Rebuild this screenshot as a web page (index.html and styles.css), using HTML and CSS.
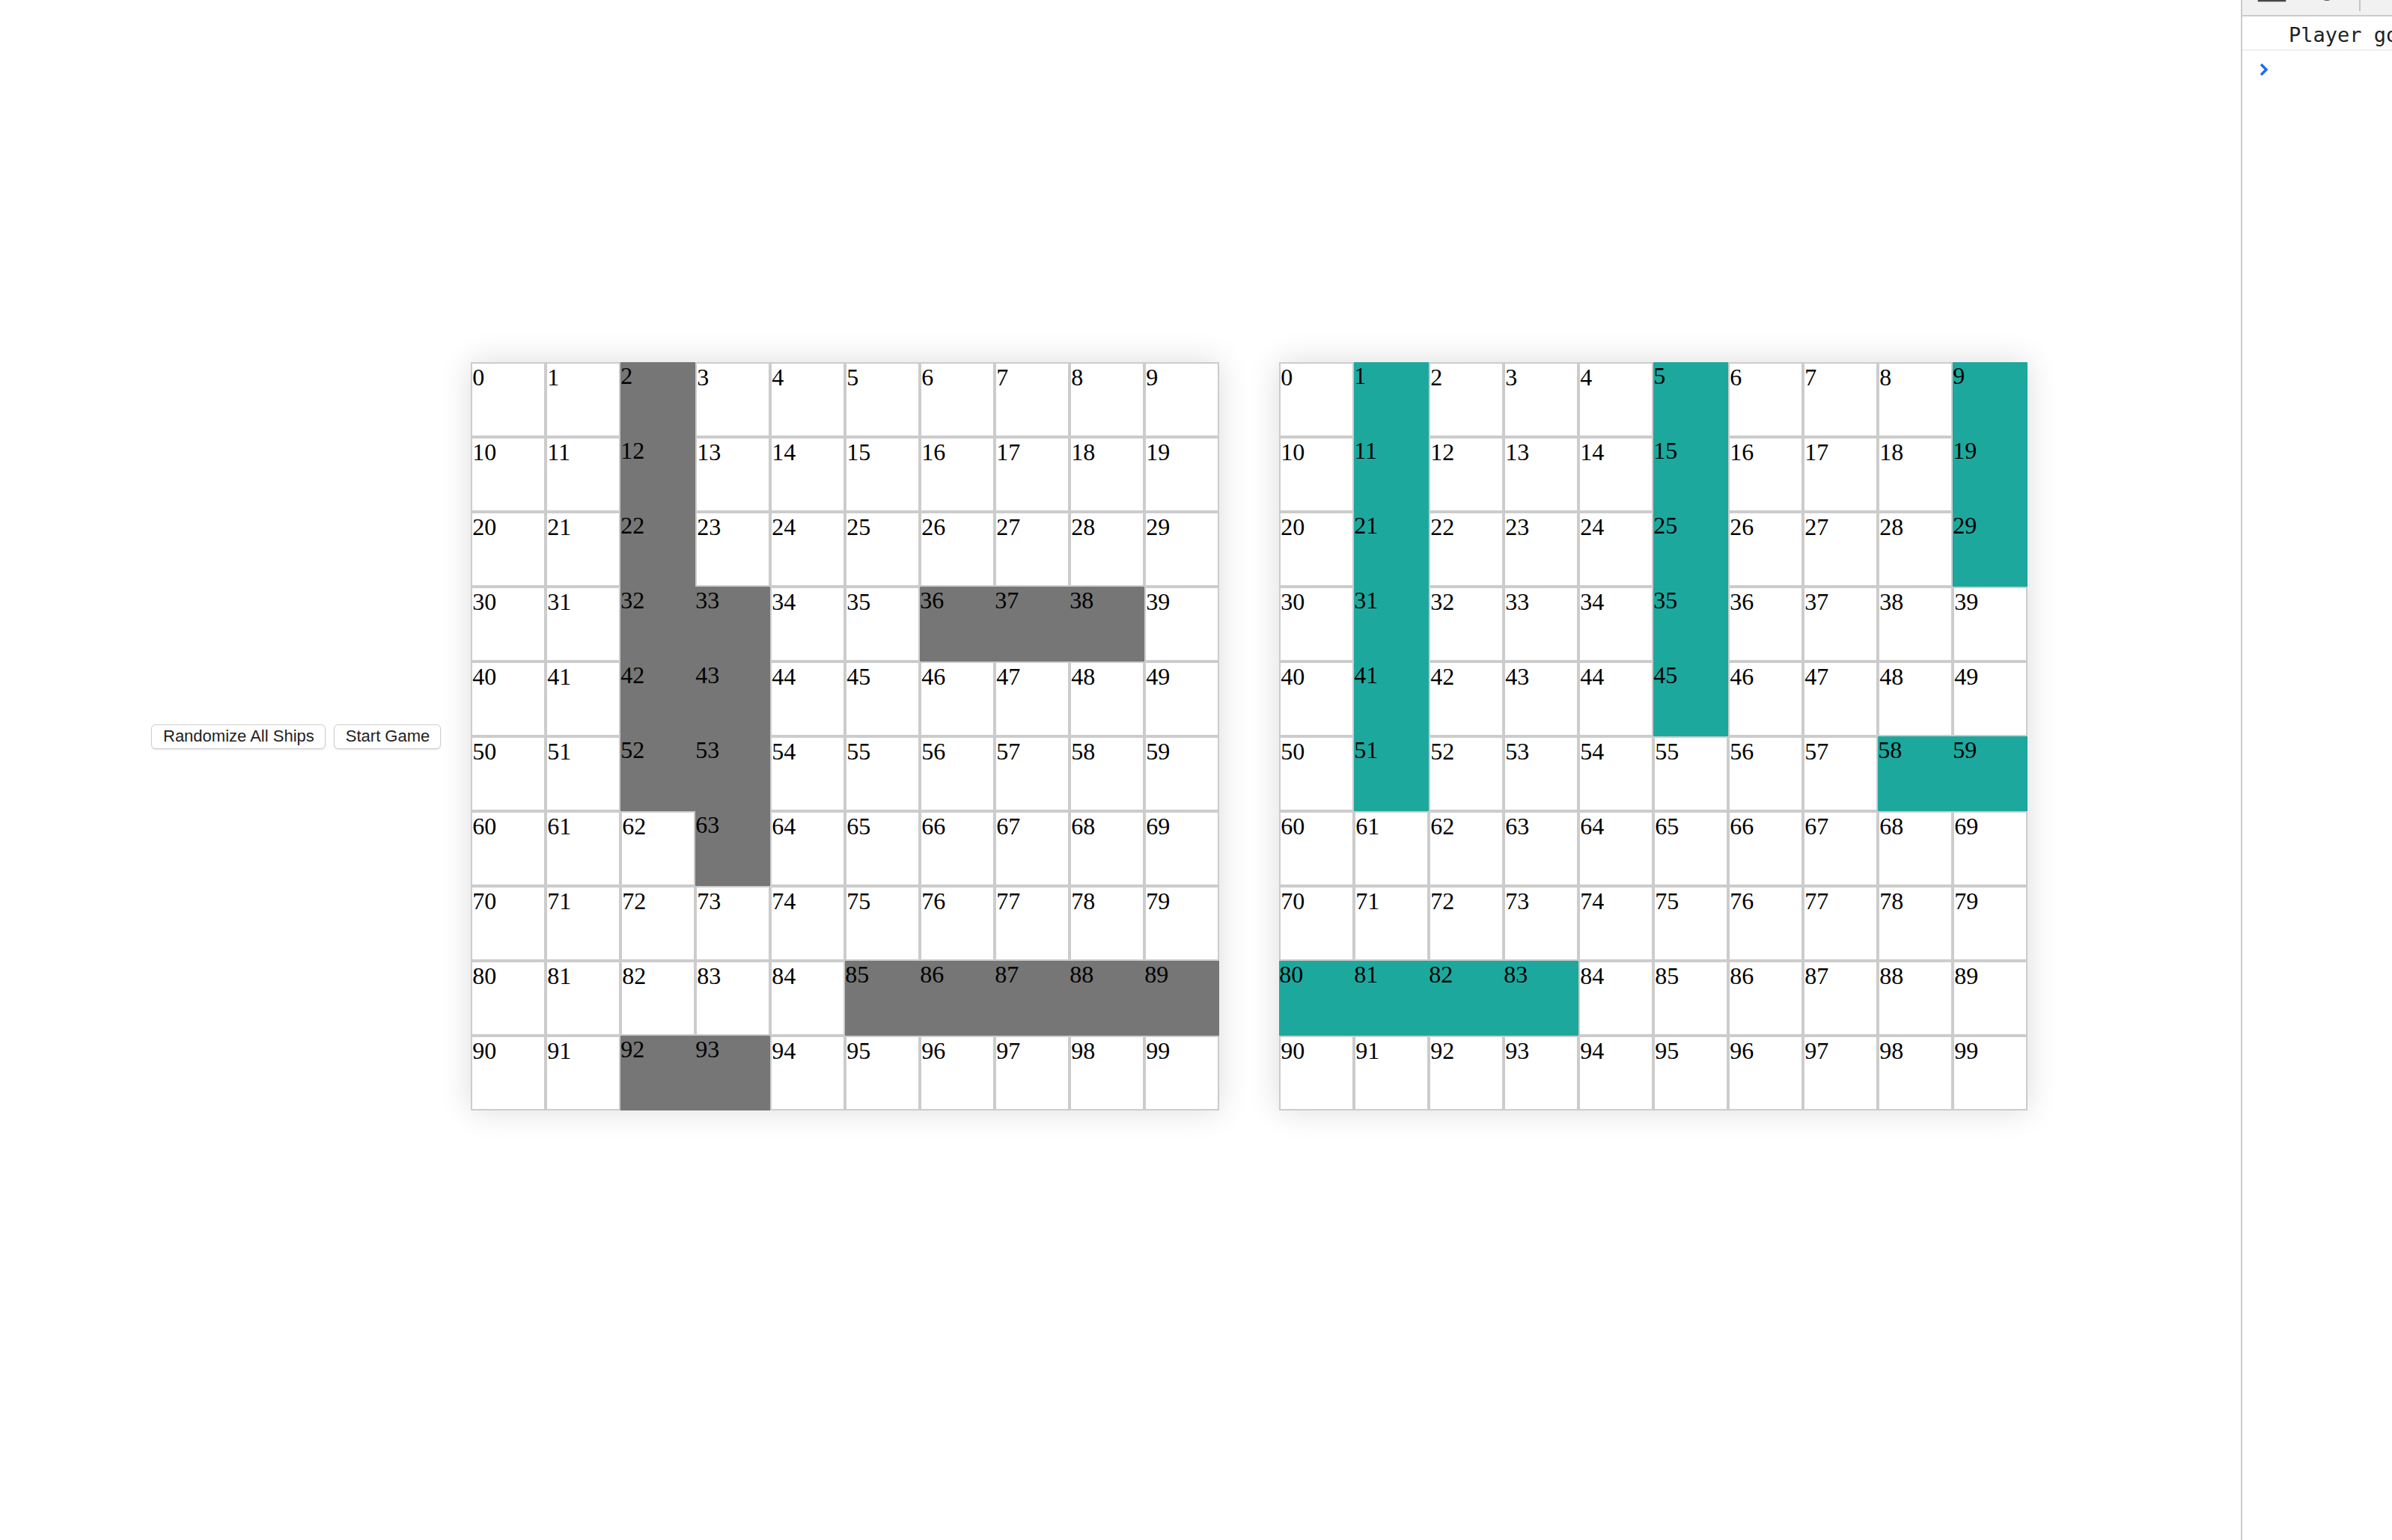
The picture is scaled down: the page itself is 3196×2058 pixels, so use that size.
FILE: index.html
```html
<!DOCTYPE html>
<html lang='en'>

<head>
    <meta charset='UTF-8'>
    <meta name='viewport' content='width=device-width, initial-scale=1.0'>
    <title>Battleship</title>
    <link rel="stylesheet" href="styles.css">
</head>

<body>
    <div id="page">
        <div id="controls">
            <button id="randomize" type="button">Randomize All Ships</button>
            <button id="start" type="button">Start Game</button>
        </div>
        <div class="board" id="player-board"></div>
        <div class="board" id="computer-board"></div>
    </div>

    <aside id="devtools">
        <div class="dt-toolbar">
            <svg width="200" height="20" viewBox="0 0 200 20">
                <rect x="22" y="-20" width="35" height="21" fill="none" stroke="#474747" stroke-width="2.5"/>
                <line x1="36" y1="-20" x2="36" y2="1" stroke="#474747" stroke-width="2.5"/>
                <circle cx="113" cy="-9" r="10" fill="#474747"/>
                <line x1="157" y1="0" x2="157" y2="15" stroke="#c4c4c4" stroke-width="2"/>
            </svg>
        </div>
        <div class="dt-message">Player goes first</div>
        <div class="dt-prompt">
            <svg width="14" height="20" viewBox="0 0 14 20">
                <path d="M3 3 L10 10 L3 17" fill="none" stroke="#1a6ef0" stroke-width="3.5"/>
            </svg>
        </div>
    </aside>

    <script>
        var playerShips = [2, 12, 22, 32, 42, 52, 33, 43, 53, 63, 36, 37, 38, 85, 86, 87, 88, 89, 92, 93];
        var computerShips = [1, 11, 21, 31, 41, 51, 5, 15, 25, 35, 45, 9, 19, 29, 58, 59, 80, 81, 82, 83];

        function buildBoard(id, ships, shipClass) {
            var board = document.getElementById(id);
            for (var i = 0; i < 100; i++) {
                var cell = document.createElement("div");
                cell.className = "cell";
                if (ships.indexOf(i) != -1) {
                    cell.className += " " + shipClass;
                }
                cell.textContent = i;
                board.appendChild(cell);
            }
        }

        buildBoard("player-board", playerShips, "ship");
        buildBoard("computer-board", computerShips, "enemy-ship");
    </script>
</body>
</html>
```

FILE: styles.css
```css
html, body {
    margin: 0;
    padding: 0;
    height: 100%;
    background-color: #ffffff;
    overflow: hidden;
}

body {
    display: flex;
}

#page {
    flex: 1;
    display: flex;
    align-items: center;
    align-self: flex-start;
    padding-top: 484px;
    padding-left: 202px;
}

#controls {
    display: flex;
    gap: 11px;
    margin-right: 40px;
}

button {
    font-family: 'Liberation Sans', Arial, sans-serif;
    font-size: 22px;
    color: #222222;
    background-color: #ffffff;
    border: 1px solid #cfcfcf;
    border-radius: 6px;
    box-shadow: 0 1px 2px rgba(0, 0, 0, 0.12);
    height: 33px;
    padding: 0 14px 0 15px;
}

.board {
    display: grid;
    grid-template-columns: repeat(10, 100px);
    grid-template-rows: repeat(10, 100px);
    box-shadow: 0 0 40px rgba(0, 0, 0, 0.14);
}

#computer-board {
    margin-left: 80px;
}

.cell {
    box-sizing: border-box;
    border: 2px solid #cccccc;
    background-color: #ffffff;
    font-family: 'Liberation Serif', 'Times New Roman', serif;
    font-size: 32px;
    line-height: 1.15;
    color: #000000;
}

.ship {
    background-color: #767676;
    border: none;
}

.enemy-ship {
    background-color: #1da89e;
    border: none;
}

#devtools {
    width: 200px;
    flex-shrink: 0;
    border-left: 2px solid #cbcbcb;
    background-color: #ffffff;
    overflow: hidden;
}

.dt-toolbar {
    height: 20px;
    background-color: #f1f1f1;
    border-bottom: 2px solid #cbcbcb;
}

.dt-toolbar svg {
    display: block;
}

.dt-message {
    font-family: 'DejaVu Sans Mono', monospace;
    font-size: 27px;
    color: #202124;
    white-space: nowrap;
    overflow: hidden;
    height: 41px;
    line-height: 44px;
    padding-top: 3px;
    padding-left: 62px;
    border-bottom: 2px solid #f0f0f0;
}

.dt-prompt {
    padding: 15px 0 0 22px;
}

.dt-prompt svg {
    display: block;
}
```
